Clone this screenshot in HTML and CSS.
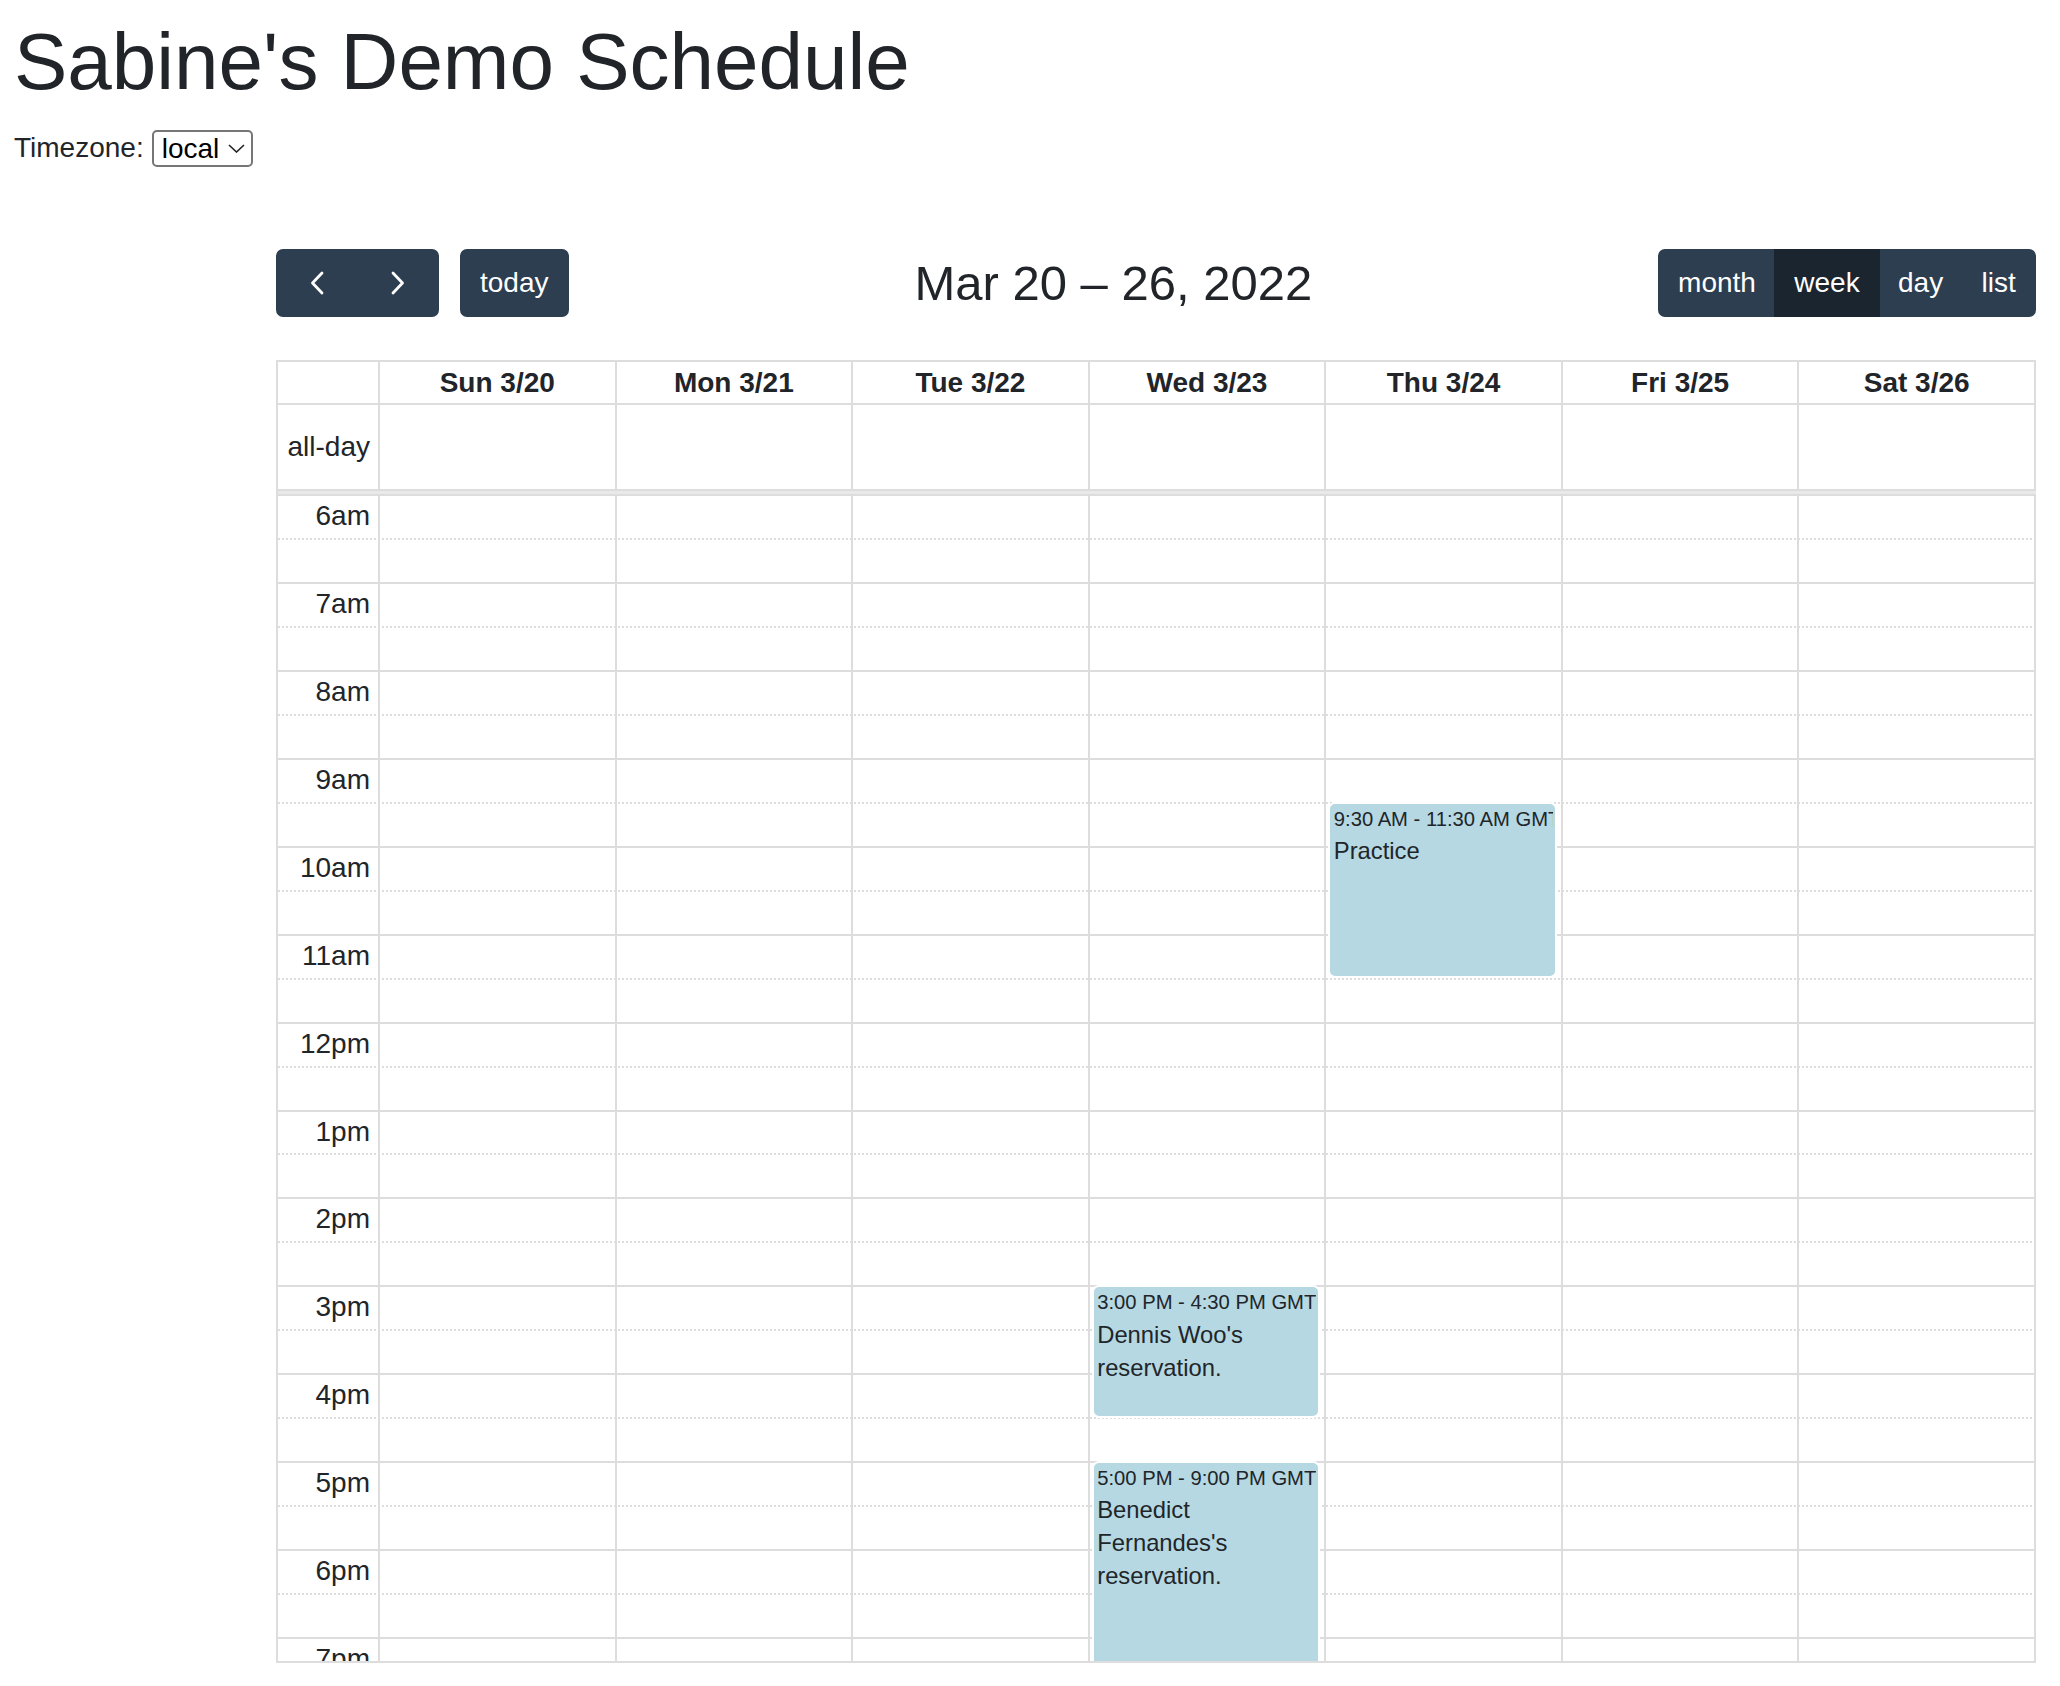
FILE: index.html
```html
<!DOCTYPE html>
<html lang="en">
<head>
<meta charset="utf-8">
<title>Sabine's Demo Schedule</title>
<link rel="stylesheet" href="styles.css">
</head>
<body>
<h1 class="page-title">Sabine's Demo Schedule</h1>
<div class="tz">
  <span class="tz-label">Timezone:</span>
  <div class="tz-select"><span>local</span><svg class="tz-caret" width="17" height="9" viewBox="0 0 17 9"><path d="M1 1 L8.5 8 L16 1" fill="none" stroke="#222" stroke-width="1.6"/></svg></div>
</div>

<div class="calendar">
  <div class="toolbar">
    <div class="chunk chunk-left">
      <div class="btn-group">
        <button class="btn btn-icon" aria-label="prev"><svg width="14" height="24" viewBox="0 0 14 24"><path d="M12 2 L2.5 12 L12 22" fill="none" stroke="#fff" stroke-width="2.8" stroke-linecap="round" stroke-linejoin="round"/></svg></button>
        <button class="btn btn-icon" aria-label="next"><svg width="14" height="24" viewBox="0 0 14 24"><path d="M2 2 L11.5 12 L2 22" fill="none" stroke="#fff" stroke-width="2.8" stroke-linecap="round" stroke-linejoin="round"/></svg></button>
      </div>
      <button class="btn btn-today">today</button>
    </div>
    <div class="chunk"><h2 class="toolbar-title">Mar 20 – 26, 2022</h2></div>
    <div class="chunk">
      <div class="btn-group">
        <button class="btn">month</button>
        <button class="btn active">week</button>
        <button class="btn">day</button>
        <button class="btn">list</button>
      </div>
    </div>
  </div>

  <div class="scrollgrid">
    <div class="grid-row head">
      <div class="cell axis"></div>
      <div class="cell">Sun 3/20</div>
      <div class="cell">Mon 3/21</div>
      <div class="cell">Tue 3/22</div>
      <div class="cell">Wed 3/23</div>
      <div class="cell">Thu 3/24</div>
      <div class="cell">Fri 3/25</div>
      <div class="cell">Sat 3/26</div>
    </div>
    <div class="grid-row allday">
      <div class="cell axis">all-day</div>
      <div class="cell"></div><div class="cell"></div><div class="cell"></div><div class="cell"></div><div class="cell"></div><div class="cell"></div><div class="cell"></div>
    </div>
    <div class="divider"></div>
    <div class="tg-body">
      <div class="slats">
        <div class="slat hour"><span class="slat-label">6am</span></div><div class="slat minor"></div>
        <div class="slat hour"><span class="slat-label">7am</span></div><div class="slat minor"></div>
        <div class="slat hour"><span class="slat-label">8am</span></div><div class="slat minor"></div>
        <div class="slat hour"><span class="slat-label">9am</span></div><div class="slat minor"></div>
        <div class="slat hour"><span class="slat-label">10am</span></div><div class="slat minor"></div>
        <div class="slat hour"><span class="slat-label">11am</span></div><div class="slat minor"></div>
        <div class="slat hour"><span class="slat-label">12pm</span></div><div class="slat minor"></div>
        <div class="slat hour"><span class="slat-label">1pm</span></div><div class="slat minor"></div>
        <div class="slat hour"><span class="slat-label">2pm</span></div><div class="slat minor"></div>
        <div class="slat hour"><span class="slat-label">3pm</span></div><div class="slat minor"></div>
        <div class="slat hour"><span class="slat-label">4pm</span></div><div class="slat minor"></div>
        <div class="slat hour"><span class="slat-label">5pm</span></div><div class="slat minor"></div>
        <div class="slat hour"><span class="slat-label">6pm</span></div><div class="slat minor"></div>
        <div class="slat hour"><span class="slat-label">7pm</span></div><div class="slat minor"></div>
      </div>
      <div class="cols">
        <div class="col axis"></div>
        <div class="col"></div>
        <div class="col"></div>
        <div class="col"></div>
        <div class="col">
          <div class="event" style="top: 792.6px; height: 128.85px;">
            <div class="event-time">3:00 PM - 4:30 PM GMT</div>
            <div class="event-title">Dennis Woo's reservation.</div>
          </div>
          <div class="event" style="top: 968.4px; height: 348.6px;">
            <div class="event-time">5:00 PM - 9:00 PM GMT</div>
            <div class="event-title">Benedict Fernandes's reservation.</div>
          </div>
        </div>
        <div class="col">
          <div class="event" style="top: 309.15px; height: 172.8px;">
            <div class="event-time">9:30 AM - 11:30 AM GMT</div>
            <div class="event-title">Practice</div>
          </div>
        </div>
        <div class="col"></div>
        <div class="col"></div>
      </div>
    </div>
  </div>
</div>
</body>
</html>
```

FILE: styles.css
```css
* { box-sizing: border-box; }

body {
  margin: 0;
  padding: 14px;
  font-family: "Liberation Sans", Arial, Helvetica, sans-serif;
  font-size: 28px;
  line-height: 42px;
  color: #212529;
  background: #fff;
}

.page-title {
  margin: 0 0 17px;
  font-size: 80px;
  font-weight: 400;
  line-height: 96px;
}

.tz {
  display: flex;
  align-items: center;
  gap: 8px;
  height: 42px;
}

.tz-select {
  display: inline-flex;
  align-items: center;
  height: 37px;
  padding: 0 6px 0 8px;
  gap: 9px;
  border: 2px solid #767676;
  border-radius: 5px;
  color: #000;
  line-height: 33px;
}

.tz-caret { display: block; }

.calendar {
  margin: 80px 10px 0 262px;
}

.toolbar {
  display: flex;
  justify-content: space-between;
  align-items: center;
  margin-bottom: 43px;
}

.chunk {
  display: flex;
  align-items: center;
}

.btn-group {
  display: inline-flex;
}

.btn {
  font-family: inherit;
  font-size: 28px;
  line-height: 42px;
  padding: 11.2px 18.2px;
  border: 2px solid #2c3e50;
  background: #2c3e50;
  color: #fff;
  border-radius: 7px;
  margin: 0;
  cursor: pointer;
}

.btn-group .btn + .btn {
  margin-left: -2px;
}

.btn-group .btn:not(:last-child) {
  border-top-right-radius: 0;
  border-bottom-right-radius: 0;
}

.btn-group .btn:not(:first-child) {
  border-top-left-radius: 0;
  border-bottom-left-radius: 0;
}

.btn.active {
  background: #1a252f;
  border-color: #1a252f;
  position: relative;
}

.btn-icon {
  width: 82.4px;
  display: inline-flex;
  align-items: center;
  justify-content: center;
  height: 68.4px;
  padding: 0;
}

.btn-icon svg { display: block; }

.btn-today {
  margin-left: 21px;
}

.toolbar-title {
  margin: 0;
  font-size: 49px;
  font-weight: 400;
  line-height: 60px;
}

/* grid */
.scrollgrid {
  border-top: 2px solid #ddd;
  border-left: 2px solid #ddd;
  border-bottom: 2px solid #ddd;
}

.grid-row {
  display: grid;
  grid-template-columns: 102px repeat(7, 1fr);
}

.cell {
  border-right: 2px solid #ddd;
  border-bottom: 2px solid #ddd;
}

.head .cell {
  height: 43px;
  display: flex;
  align-items: center;
  justify-content: center;
  font-weight: 700;
}

.allday .cell {
  height: 86px;
}

.allday .axis {
  display: flex;
  align-items: center;
  justify-content: flex-end;
  padding-right: 8px;
}

.divider {
  height: 3px;
  background: #e9e9e9;
}

.tg-body {
  position: relative;
  height: 1167px;
  overflow: hidden;
}

.slat {
  height: 43.95px;
  border-top: 2px solid #ddd;
}

.slat.minor {
  border-top-style: dotted;
}

.slat-label {
  display: block;
  width: 102px;
  padding-right: 10px;
  text-align: right;
  line-height: 39px;
}

.cols {
  position: absolute;
  inset: 0;
  display: grid;
  grid-template-columns: 102px repeat(7, 1fr);
}

.col {
  position: relative;
  border-right: 2px solid #ddd;
}

.event {
  position: absolute;
  left: 4px;
  right: 6px;
  background: #b5d8e3;
  border: 2px solid #b5d8e3;
  border-radius: 5px;
  padding: 1px 1.5px;
  overflow: hidden;
  color: #212529;
  font-size: 23.8px;
  box-shadow: 0 0 0 2px #fff;
}

.event-time {
  font-size: 20.23px;
  line-height: 25.6px;
  margin-bottom: 2px;
  white-space: nowrap;
}

.event-title {
  line-height: 33px;
}
```
